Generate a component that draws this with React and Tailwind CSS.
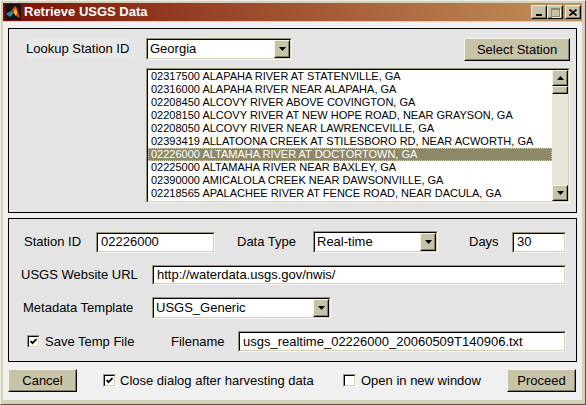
import React from 'react';

const STATIONS = [
  ['02317500', 'ALAPAHA RIVER AT STATENVILLE, GA'],
  ['02316000', 'ALAPAHA RIVER NEAR ALAPAHA, GA'],
  ['02208450', 'ALCOVY RIVER ABOVE COVINGTON, GA'],
  ['02208150', 'ALCOVY RIVER AT NEW HOPE ROAD, NEAR GRAYSON, GA'],
  ['02208050', 'ALCOVY RIVER NEAR LAWRENCEVILLE, GA'],
  ['02393419', 'ALLATOONA CREEK AT STILESBORO RD, NEAR ACWORTH, GA'],
  ['02226000', 'ALTAMAHA RIVER AT DOCTORTOWN, GA'],
  ['02225000', 'ALTAMAHA RIVER NEAR BAXLEY, GA'],
  ['02390000', 'AMICALOLA CREEK NEAR DAWSONVILLE, GA'],
  ['02218565', 'APALACHEE RIVER AT FENCE ROAD, NEAR DACULA, GA'],
];

const SELECTED = '02226000';

function Raised({ className = '', children }) {
  return (
    <div className={`border border-t-[#f5f3e8] border-l-[#f5f3e8] border-b-black border-r-black ${className}`}>
      <div className="w-full h-full border border-t-[#c7c3a8] border-l-[#c7c3a8] border-b-[#86826a] border-r-[#86826a] bg-[#c7c3a8] flex items-center justify-center">
        {children}
      </div>
    </div>
  );
}

function Sunken({ className = '', children }) {
  return (
    <div className={`border border-t-[#9c987e] border-l-[#9c987e] border-b-[#f7f6ee] border-r-[#f7f6ee] ${className}`}>
      <div className="w-full h-full border border-t-black border-l-black border-b-[#d5d1b9] border-r-[#d5d1b9] bg-white flex">
        {children}
      </div>
    </div>
  );
}

function DownArrow() {
  return (
    <svg width="7" height="4" viewBox="0 0 7 4">
      <polygon points="0,0 7,0 3.5,4" fill="black" />
    </svg>
  );
}

function UpArrow() {
  return (
    <svg width="7" height="4" viewBox="0 0 7 4">
      <polygon points="0,4 7,4 3.5,0" fill="black" />
    </svg>
  );
}

function TextBox({ value, className = '' }) {
  return (
    <Sunken className={className}>
      <div className="flex-1 flex items-center pl-[3px] text-[13px] text-black whitespace-nowrap overflow-hidden">{value}</div>
    </Sunken>
  );
}

function Dropdown({ value, className = '' }) {
  return (
    <Sunken className={className}>
      <div className="flex-1 flex items-center pl-[2px] text-[13px] text-black whitespace-nowrap overflow-hidden">{value}</div>
      <Raised className="w-[16px] h-full">
        <DownArrow />
      </Raised>
    </Sunken>
  );
}

function Checkbox({ checked }) {
  return (
    <Sunken className="w-[13px] h-[13px] shrink-0">
      <div className="flex-1 flex items-center justify-center">
        {checked && (
          <svg width="7" height="7" viewBox="0 0 7 7">
            <path d="M0.5 3 L2.5 5.2 L6.5 1" stroke="black" strokeWidth="1.8" fill="none" />
          </svg>
        )}
      </div>
    </Sunken>
  );
}

function Label({ children, className = '' }) {
  return <div className={`text-[13px] text-black whitespace-nowrap ${className}`}>{children}</div>;
}

function MatlabIcon() {
  return (
    <svg width="16" height="16" viewBox="0 0 16 16">
      <rect width="16" height="16" fill="#141414" />
      <polygon points="1,10 6,7 9,9 5,13" fill="#3b86a8" />
      <polygon points="6,7 10,2 12,4 15,14 11,12 9,9" fill="#e0400e" />
      <polygon points="9,9 10,4 12,8 11,12" fill="#f8d020" />
    </svg>
  );
}

function TitleBar() {
  return (
    <div className="h-[18px] flex items-center bg-linear-to-r from-[#7b0a06] to-[#c3915a] pl-[2px] pr-[1px]">
      <MatlabIcon />
      <span className="ml-[3px] text-[13px] font-bold text-white">Retrieve USGS Data</span>
      <div className="ml-auto flex items-center">
        <Raised className="w-[16px] h-[14px]">
          <div className="w-[6px] h-[2px] bg-black mt-[6px] -ml-[1px]" />
        </Raised>
        <Raised className="w-[16px] h-[14px]">
          <div className="w-[9px] h-[9px] border border-t-2 border-[#8e8a72] shadow-[1px_1px_0_#f5f3e8]" />
        </Raised>
        <Raised className="w-[16px] h-[14px] ml-[2px]">
          <svg width="8" height="7" viewBox="0 0 8 7">
            <path d="M0.5 0.5 L7.5 6.5 M7.5 0.5 L0.5 6.5" stroke="black" strokeWidth="1.7" />
          </svg>
        </Raised>
      </div>
    </div>
  );
}

function StationList() {
  return (
    <Sunken className="w-[424px] h-[135px] mt-[7px]">
      <div className="flex-1 flex flex-col pt-0">
        {STATIONS.map(([id, name]) => {
          const sel = id === SELECTED;
          return (
            <div
              key={id}
              className={`h-[13px] flex items-center pl-[2px] border text-[11px] leading-[13px] whitespace-nowrap overflow-hidden ${
                sel ? 'bg-[#8d8868] text-white border-dotted border-[#c9c6dc]' : 'border-transparent text-black'
              }`}
            >
              {id} {name}
            </div>
          );
        })}
      </div>
      <div className="w-[16px] h-full bg-[#e8e6d8] flex flex-col">
        <Raised className="w-[16px] h-[16px]">
          <UpArrow />
        </Raised>
        <Raised className="w-[16px] h-[8px]" />
        <div className="flex-1" />
        <Raised className="w-[16px] h-[16px]">
          <DownArrow />
        </Raised>
      </div>
    </Sunken>
  );
}

export default function App() {
  return (
    <div className="w-[586px] h-[405px] bg-[#d5d1b9] border border-t-[#eeecdf] border-l-[#eeecdf] border-b-[#55523f] border-r-[#55523f] pt-[2px] pl-[2px] pr-[3px] pb-[4px] font-['Liberation_Sans',Arial,sans-serif] overflow-hidden">
      <TitleBar />
      <div className="mt-[1px] h-[378px] bg-[#f0f0f0] pt-[6px] px-[5px] flex flex-col">
        {/* lookup panel */}
        <div className="h-[185px] border border-black bg-[#e4e4e4] pt-[9px] pl-[17px] flex">
          <div className="w-[120px] h-[22px] flex items-center">
            <Label className="bg-[#e8e8e8]">Lookup Station ID</Label>
          </div>
          <div className="w-[424px] flex flex-col">
            <div className="flex items-start justify-between">
              <Dropdown value="Georgia" className="w-[146px] h-[22px]" />
              <Raised className="w-[106px] h-[23px]">
                <span className="text-[13px] text-black">Select Station</span>
              </Raised>
            </div>
            <StationList />
          </div>
        </div>

        {/* settings panel */}
        <div className="mt-[5px] h-[144px] border border-black bg-[#e4e4e4] pt-[12px] flex flex-col">
          <div className="h-[22px] flex items-center pl-[15px]">
            <Label className="w-[72px]">Station ID</Label>
            <TextBox value="02226000" className="w-[119px] h-[21px]" />
            <Label className="ml-[22px] w-[76px]">Data Type</Label>
            <Dropdown value="Real-time" className="w-[125px] h-[22px]" />
            <Label className="ml-[31px] w-[43px]">Days</Label>
            <TextBox value="30" className="w-[54px] h-[21px]" />
          </div>
          <div className="mt-[12px] h-[20px] flex items-center pl-[12px]">
            <Label className="w-[131px]">USGS Website URL</Label>
            <TextBox value="http://waterdata.usgs.gov/nwis/" className="w-[414px] h-[20px]" />
          </div>
          <div className="mt-[12px] h-[22px] flex items-center pl-[14px]">
            <Label className="w-[129px]">Metadata Template</Label>
            <Dropdown value="USGS_Generic" className="w-[179px] h-[22px]" />
          </div>
          <div className="mt-[12px] h-[21px] flex items-center pl-[18px]">
            <Checkbox checked />
            <Label className="ml-[5px] w-[126px]">Save Temp File</Label>
            <Label className="w-[67px]">Filename</Label>
            <TextBox value="usgs_realtime_02226000_20060509T140906.txt" className="w-[328px] h-[21px]" />
          </div>
        </div>

        {/* actions */}
        <div className="mt-[7px] h-[23px] flex items-center pr-[1px]">
          <Raised className="w-[69px] h-[23px]">
            <span className="text-[13px] text-black">Cancel</span>
          </Raised>
          <div className="ml-[26px]">
            <Checkbox checked />
          </div>
          <Label className="ml-[4px] w-[223px]">Close dialog after harvesting data</Label>
          <Checkbox />
          <Label className="ml-[5px]">Open in new window</Label>
          <Raised className="ml-auto w-[69px] h-[23px]">
            <span className="text-[13px] text-black">Proceed</span>
          </Raised>
        </div>
      </div>
    </div>
  );
}
